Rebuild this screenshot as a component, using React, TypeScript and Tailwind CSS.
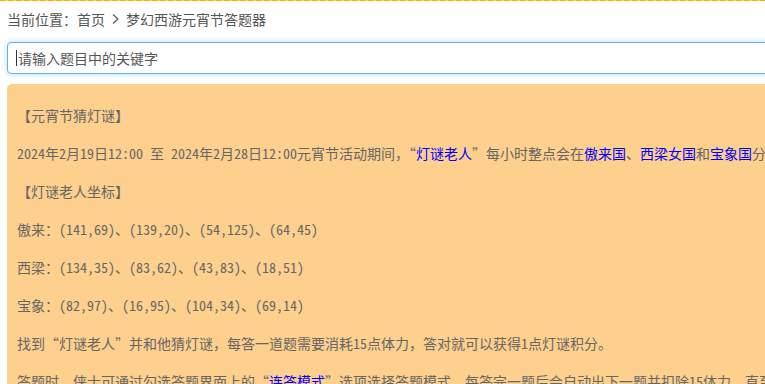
import React from 'react';

const font = "font-['Noto_Sans_Mono_CJK_SC','Noto_Sans_CJK_SC',sans-serif]";

const coords = [
  { name: '傲来', list: '(141,69)、(139,20)、(54,125)、(64,45)' },
  { name: '西梁', list: '(134,35)、(83,62)、(43,83)、(18,51)' },
  { name: '宝象', list: '(82,97)、(16,95)、(104,34)、(69,14)' },
];

function Blue({ children }: { children: React.ReactNode }) {
  return <a className="text-[#0000ff]">{children}</a>;
}

export default function App() {
  return (
    <div className={`w-[765px] h-[384px] overflow-hidden bg-white text-[14px] ${font}`}>
      {/* dashed top rule */}
      <div className="h-px w-full bg-[repeating-linear-gradient(90deg,#f7a21b_0_5px,#ffe100_5px_8px)]" />

      <div className="w-[1100px]">
        {/* breadcrumb */}
        <div className="flex items-center pl-[7px] pt-[9px] leading-[18px] text-[#555]">
          <span>当前位置：</span>
          <a>首页</a>
          <svg className="mx-[6px]" width="9" height="12" viewBox="0 0 9 12" fill="none">
            <path d="M2 1.5 L7 6 L2 10.5" stroke="#555" strokeWidth="1.1" />
          </svg>
          <span>梦幻西游元宵节答题器</span>
        </div>

        {/* search */}
        <div className="mt-[14px] ml-[7px]">
          <div className="flex h-[32px] w-[1000px] items-center rounded-[4px] border border-[#66afe9] bg-white pl-[8px] shadow-[0_0_6px_rgba(102,175,233,0.45)]">
            <span className="mr-px h-[16px] w-px bg-[#333]" />
            <input
              className="flex-1 text-[14px] text-[#555] placeholder:text-[#555] outline-none"
              placeholder="请输入题目中的关键字"
            />
          </div>
        </div>

        {/* content */}
        <div className="mt-[10px] ml-[7px] w-[1000px] rounded-tl-[5px] bg-[#fdd08e] pl-[10px] pt-[5px] text-[#666] whitespace-nowrap">
          <p className="my-[14px] leading-[24px]">【元宵节猜灯谜】</p>
          <p className="my-[14px] leading-[24px]">
            2024年2月19日12:00 至 2024年2月28日12:00元宵节活动期间，“<Blue>灯谜老人</Blue>”每小时整点会在<Blue>傲来国</Blue>、<Blue>西梁女国</Blue>和<Blue>宝象国</Blue>分别出现，侠士们可以前往寻找。
          </p>
          <p className="my-[14px] leading-[24px]">【灯谜老人坐标】</p>
          {coords.map((c) => (
            <p key={c.name} className="my-[14px] leading-[24px]">
              {c.name}：{c.list}
            </p>
          ))}
          <p className="my-[14px] leading-[24px]">
            找到“灯谜老人”并和他猜灯谜，每答一道题需要消耗15点体力，答对就可以获得1点灯谜积分。
          </p>
          <p className="my-[14px] leading-[24px]">
            答题时，侠士可通过勾选答题界面上的“<Blue>连答模式</Blue>”选项选择答题模式，每答完一题后会自动出下一题并扣除15体力，直至体力不足。
          </p>
        </div>
      </div>
    </div>
  );
}
